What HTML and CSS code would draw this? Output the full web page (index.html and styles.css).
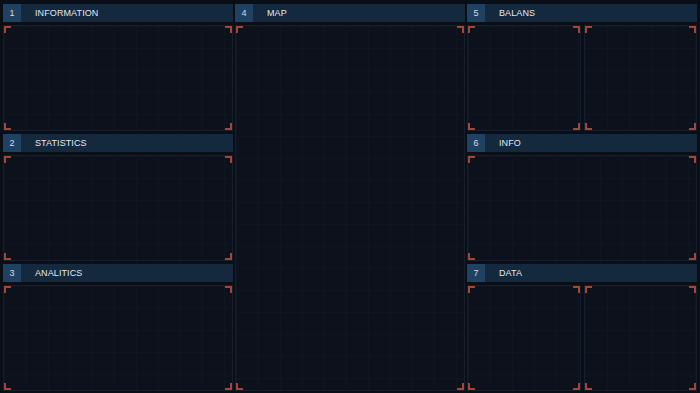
FILE: index.html
```html
<!DOCTYPE html>
<html lang="en">
<head>
    <meta charset="UTF-8">
    <meta name="viewport" content="width=device-width, initial-scale=1.0">
    <title>Dashboard</title>
    <link rel="stylesheet" href="styles.css">
</head>
<body>
    <div class="dashboard">
        <!-- Column 1 -->
        <div class="panel">
            <div class="panel-header"><span class="num">1</span><span class="label">INFORMATION</span></div>
            <div class="panel-body"><div class="frame"></div></div>
        </div>

        <!-- Column 2: map spans all rows -->
        <div class="panel map">
            <div class="panel-header"><span class="num">4</span><span class="label">MAP</span></div>
            <div class="panel-body"><div class="frame"></div></div>
        </div>

        <!-- Column 3 -->
        <div class="panel">
            <div class="panel-header"><span class="num">5</span><span class="label">BALANS</span></div>
            <div class="panel-body split"><div class="frame"></div><div class="frame"></div></div>
        </div>

        <div class="panel">
            <div class="panel-header"><span class="num">2</span><span class="label">STATISTICS</span></div>
            <div class="panel-body"><div class="frame"></div></div>
        </div>

        <div class="panel">
            <div class="panel-header"><span class="num">6</span><span class="label">INFO</span></div>
            <div class="panel-body"><div class="frame"></div></div>
        </div>

        <div class="panel">
            <div class="panel-header"><span class="num">3</span><span class="label">ANALITICS</span></div>
            <div class="panel-body"><div class="frame"></div></div>
        </div>

        <div class="panel">
            <div class="panel-header"><span class="num">7</span><span class="label">DATA</span></div>
            <div class="panel-body split"><div class="frame"></div><div class="frame"></div></div>
        </div>
    </div>
</body>
</html>
```

FILE: styles.css
```css
html, body { height: 100%; }
body {
    margin: 0;
    background: #0a0e17;
    font-family: "Liberation Sans", Arial, sans-serif;
    color: #e2e8ef;
    overflow: hidden;
}

.dashboard {
    display: grid;
    grid-template-columns: 230px 230px 230px;
    grid-template-rows: 127px 127px 127px;
    column-gap: 2px;
    row-gap: 3px;
    padding: 4px 3px 0 3px;
}

.panel { display: flex; flex-direction: column; gap: 3px; min-height: 0; }
.map { grid-column: 2; grid-row: 1 / span 3; }

.panel-header {
    height: 18px;
    flex: none;
    display: flex;
    align-items: center;
    background: #14293e;
    font-size: 9px;
    letter-spacing: 0.1px;
}
.panel-header .num {
    width: 18px;
    height: 100%;
    display: flex;
    align-items: center;
    justify-content: center;
    background: #1f4262;
    color: #d4dde7;
}
.panel-header .label { margin-left: 14px; }

.panel-body { flex: 1; display: flex; gap: 3px; min-height: 0; }

.frame {
    flex: 1;
    border: 1px solid #161e2b;
    --c: #a24736;
    background:
        linear-gradient(var(--c), var(--c)) left top / 7px 2px no-repeat,
        linear-gradient(var(--c), var(--c)) left top / 2px 7px no-repeat,
        linear-gradient(var(--c), var(--c)) right top / 7px 2px no-repeat,
        linear-gradient(var(--c), var(--c)) right top / 2px 7px no-repeat,
        linear-gradient(var(--c), var(--c)) left bottom / 7px 2px no-repeat,
        linear-gradient(var(--c), var(--c)) left bottom / 2px 7px no-repeat,
        linear-gradient(var(--c), var(--c)) right bottom / 7px 2px no-repeat,
        linear-gradient(var(--c), var(--c)) right bottom / 2px 7px no-repeat,
        linear-gradient(90deg, rgba(40, 52, 70, 0.12) 1px, transparent 1px) 0 0 / 22px 22px,
        linear-gradient(rgba(40, 52, 70, 0.12) 1px, transparent 1px) 0 0 / 22px 22px,
        #0c111b;
}
```
